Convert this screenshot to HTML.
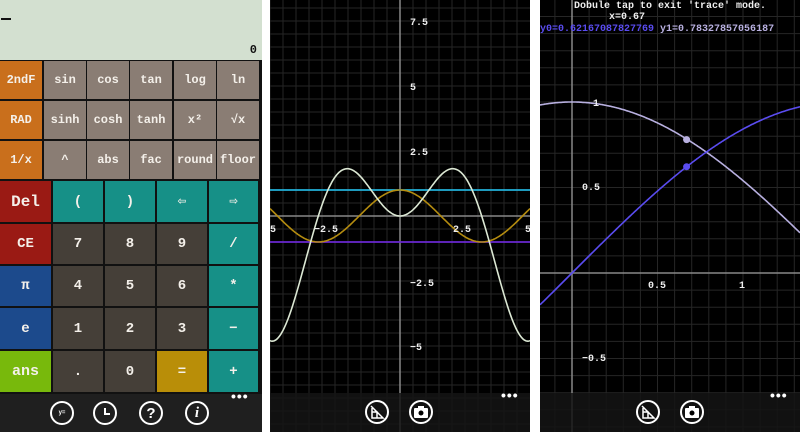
<!DOCTYPE html>
<html><head><meta charset="utf-8"><style>
*{margin:0;padding:0;box-sizing:border-box}
body{width:800px;height:432px;background:#fff;position:relative;overflow:hidden;font-family:"Liberation Mono",monospace}
.p{position:absolute;top:0;height:432px;overflow:hidden}
#p1{left:0;width:262px;background:#111}
.disp{position:absolute;left:0;top:0;width:262px;height:60px;background:#d3e0d0}
.b{position:absolute;display:flex;align-items:center;justify-content:center;color:#f4f0ea;font-weight:bold;font-size:12px}
.g{background:#8a7d74}.o{background:#c96f1c}.r{background:#9a1a14}.t{background:#169087}.d{background:#453f38}.bl{background:#1c4a8c}.gr{background:#78b90c}.y{background:#b98e08}
.bar{position:absolute;left:0;bottom:0;width:100%;height:38px;background:#1f1f1f}
.ic{position:absolute;width:24px;height:24px;border:2px solid #fff;border-radius:50%;color:#fff;display:flex;align-items:center;justify-content:center;font-weight:bold;font-family:"Liberation Sans",sans-serif}
.dots{position:absolute;color:#fff;font-size:14px;letter-spacing:1px;font-family:"Liberation Sans",sans-serif;font-weight:bold}
</style></head><body>
<div class="p" id="p1">
<div class="disp"><div style="position:absolute;left:1px;top:18px;width:10px;height:2px;background:#111"></div><div style="position:absolute;right:5px;top:43px;font-size:12px;font-weight:bold;color:#111">0</div></div>
<div id="keys"></div>
<div class="bar" style="height:38px">
<div class="ic" style="left:50px;top:7px;font-size:6px">y=</div>
<div class="ic" style="left:93px;top:7px"><div style="width:6px;height:7px;border-left:2px solid #fff;border-bottom:2px solid #fff;margin:-3px 0 0 3px"></div></div>
<div class="ic" style="left:139px;top:7px;font-size:15px">?</div>
<div class="ic" style="left:185px;top:7px;font-size:15px;font-style:italic;font-family:'Liberation Serif',serif">i</div>
<div class="dots" style="left:231px;top:-6px">•••</div>
</div>
</div>
<div class="p" id="p2" style="left:270px;width:260px;background:#000"><svg id="s2" width="260" height="432"></svg>
<div class="bar" style="height:39px;background:rgba(20,20,20,.85)">
<div class="ic" style="left:95px;top:7px"><svg width="16" height="16" viewBox="0 0 16 16" fill="none" stroke="#fff" stroke-width="1.5"><path d="M2 2L14 14H3V4M3 8h5v6"/></svg></div>
<div class="ic" style="left:139px;top:7px"><svg width="14" height="12" viewBox="0 0 14 12"><rect x="0" y="2" width="14" height="10" rx="1" fill="#fff"/><rect x="4" y="0" width="6" height="3" fill="#fff"/><circle cx="7" cy="7" r="2.5" fill="#000"/></svg></div>
<div class="dots" style="left:231px;top:-6px">•••</div></div></div>
<div class="p" id="p3" style="left:540px;width:260px;background:#000"><svg id="s3" width="260" height="432"></svg>
<div class="bar" style="height:39px;background:rgba(20,20,20,.85)">
<div class="ic" style="left:96px;top:7px"><svg width="16" height="16" viewBox="0 0 16 16" fill="none" stroke="#fff" stroke-width="1.5"><path d="M2 2L14 14H3V4M3 8h5v6"/></svg></div>
<div class="ic" style="left:140px;top:7px"><svg width="14" height="12" viewBox="0 0 14 12"><rect x="0" y="2" width="14" height="10" rx="1" fill="#fff"/><rect x="4" y="0" width="6" height="3" fill="#fff"/><circle cx="7" cy="7" r="2.5" fill="#000"/></svg></div>
<div class="dots" style="left:230px;top:-6px">•••</div></div>
<div style="position:absolute;left:0;top:1px;width:260px;text-align:center;color:#eee;font-size:10px;font-weight:bold">Dobule tap to exit 'trace' mode.</div>
<div style="position:absolute;left:69px;top:12px;color:#eee;font-size:10px;font-weight:bold">x=0.67</div>
<div style="position:absolute;left:0;top:24px;font-size:10px;font-weight:bold;white-space:nowrap"><span style="color:#5a4cf0">y0=0.62167087827769</span> <span style="color:#b8b0e0">y1=0.78327857056187</span></div>
</div>
<script>
var K=document.getElementById('keys'),h='';
function k(x,y,w,hh,c,t,fs){h+='<div class="b '+c+'" style="left:'+x+'px;top:'+y+'px;width:'+w+'px;height:'+hh+'px'+(fs?';font-size:'+fs+'px':'')+'">'+t+'</div>';}
var cx=[0,44,87,130,174,217],rs=[[61,'o2ndF','gsin','gcos','gtan','glog','gln'],[101,'oRAD','gsinh','gcosh','gtanh','gx²','g√x'],[141,'o1/x','g^','gabs','gfac','ground','gfloor']];
rs.forEach(function(r){for(var i=0;i<6;i++){var s=r[i+1];k(cx[i],r[0],42,38,s[0],s.slice(1));}});
var c5=[0,53,105,157,209],w5=[51,50,50,50,49];
var r5=[[181,41,'r|Del|16','t|(','t|)','t|⇦','t|⇨'],[224,40,'r|CE','d|7','d|8','d|9','t|/'],[266,40,'bl|π','d|4','d|5','d|6','t|*'],[308,41,'bl|e','d|1','d|2','d|3','t|−'],[351,41,'gr|ans|15','d|.','d|0','y|=','t|+']];
r5.forEach(function(r){for(var i=0;i<5;i++){var s=r[i+2].split('|');k(c5[i],r[0],w5[i],r[1],s[0],s[1],s[2]||14);}});
K.innerHTML=h;
function svg(id,ox,oy,u,step,lines,curves,labels){var s='';
for(var x=ox%step;x<260;x+=step)s+='<line x1="'+x+'" y1="0" x2="'+x+'" y2="432" stroke="#262626"/>';
for(var y=oy%step;y<432;y+=step)s+='<line x1="0" y1="'+y+'" x2="260" y2="'+y+'" stroke="#262626"/>';
s+='<line x1="'+ox+'" y1="0" x2="'+ox+'" y2="432" stroke="#888" stroke-width="1.5"/><line x1="0" y1="'+oy+'" x2="260" y2="'+oy+'" stroke="#888" stroke-width="1.5"/>';
s+=lines;
curves.forEach(function(c){var d='';for(var px=0;px<=260;px+=1){var xv=(px-ox)/u;var yv=oy-c[0](xv)*u;d+=(px?'L':'M')+px+' '+yv.toFixed(1);}s+='<path d="'+d+'" fill="none" stroke="'+c[1]+'" stroke-width="1.6"/>';});
s+=labels;document.getElementById(id).innerHTML=s;}
function T(x,y,t,a){return '<text x="'+x+'" y="'+y+'" fill="#eee" font-size="10" font-weight="bold" font-family="Liberation Mono" '+(a||'')+'>'+t+'</text>';}
svg('s2',130,216,26,13,'<line x1="0" y1="190" x2="260" y2="190" stroke="#22b0d8" stroke-width="1.8"/><line x1="0" y1="242" x2="260" y2="242" stroke="#6a28d0" stroke-width="1.8"/>',
[[Math.cos,'#b48c10'],[function(x){return x*Math.sin(x)},'#dce8d4']],
T(140,25,'7.5')+T(140,90,'5')+T(140,155,'2.5')+T(140,286,'−2.5')+T(140,350,'−5')+T(44,232,'−2.5')+T(183,232,'2.5')+T(0,232,'5')+T(255,232,'5'));
svg('s3',32,273,171,17.1,'',[[Math.cos,'#b8b0e0'],[Math.sin,'#5a4cf0']],
T(53,106,'1')+T(42,190,'0.5')+T(42,361,'−0.5')+T(108,288,'0.5')+T(199,288,'1')+'<circle cx="146.6" cy="139.6" r="3.5" fill="#b8b0e0"/><circle cx="146.6" cy="166.7" r="3.5" fill="#5a4cf0"/>');
</script>
</body></html>
